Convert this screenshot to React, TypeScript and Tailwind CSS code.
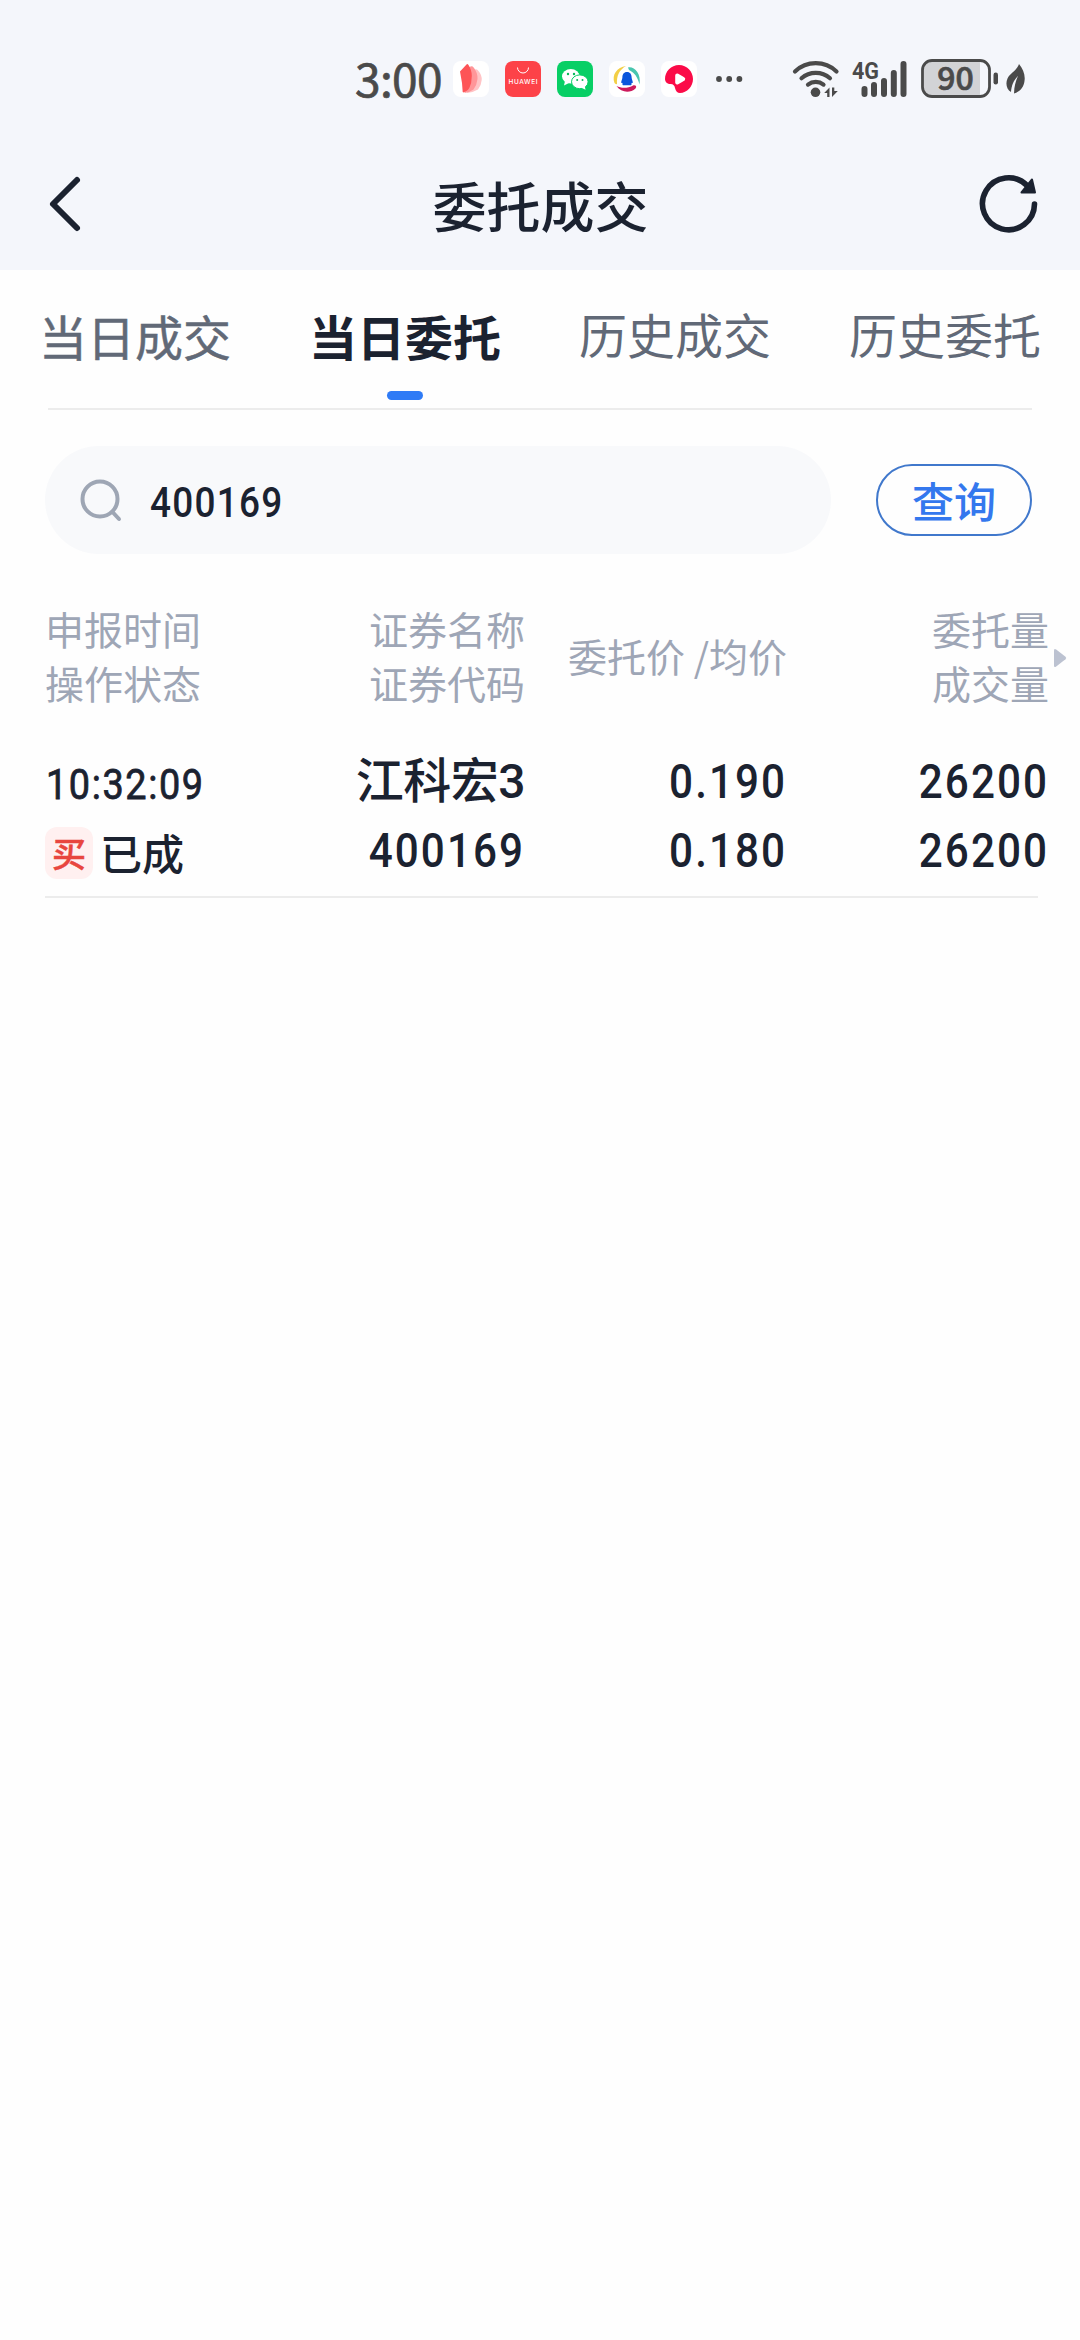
import clsx from "clsx";

const tabs = ["当日成交", "当日委托", "历史成交", "历史委托"];

const orders = [
  {
    time: "10:32:09",
    side: "买",
    status: "已成",
    name: "江科宏3",
    code: "400169",
    price: "0.190",
    avgPrice: "0.180",
    amount: "26200",
    dealAmount: "26200",
  },
];

function AppIcons() {
  return (
    <div className="ml-[13px] flex gap-4">
      <svg width="36" height="36" viewBox="0 0 36 36">
        <rect width="36" height="36" rx="8" fill="#fff" />
        <path d="M18 6q2-.5 3 1l1 1.500q2-.8 3.500 1.500 3.500 4 3.200 9-.3 5-3.700 9.500-5 3-11 3.500z" fill="#ffc4c6" />
        <path d="M15 7l2.500-1.500q2-.8 3 1 4.500 5.500 4 11.500-.6 6-4 10.500-4 3-9 3.500z" fill="#ff9699" />
        <path d="M7 10.500l6.500-7q1-1 1.800.3 3.500 5 3.500 11.200 0 7-2.500 12-1 2-3 3l-2.800 1.500-.8-.5-.7-9z" fill="#fd5457" />
      </svg>
      <svg width="36" height="36" viewBox="0 0 36 36">
        <rect width="36" height="36" rx="8" fill="#fd4248" />
        <path d="M12.500 6.500a5.500 5.500 0 0 0 11 0" fill="none" stroke="#fff" strokeWidth="1" />
        <text x="18" y="23" textAnchor="middle" textLength="29" fontSize="6.500" fontWeight="500" fill="#fff" fontFamily="Inter">
          HUAWEI
        </text>
      </svg>
      <svg width="36" height="36" viewBox="0 0 36 36">
        <rect width="36" height="36" rx="8" fill="#07cf65" />
        <ellipse cx="13.800" cy="15.300" rx="8.800" ry="7.300" fill="#fff" />
        <path d="M8 20l-1 4.500 5-2.500z" fill="#fff" />
        <ellipse cx="22.800" cy="20.800" rx="8.300" ry="6.900" fill="#fff" stroke="#07cf65" strokeWidth="1" />
        <path d="M24 26.500l4.500 2.300-.8-4z" fill="#fff" />
        <circle cx="11" cy="13" r="1.200" fill="#07b95a" />
        <circle cx="17" cy="13" r="1.200" fill="#07b95a" />
        <circle cx="20.200" cy="19" r="1" fill="#07b95a" />
        <circle cx="25.500" cy="19" r="1" fill="#07b95a" />
      </svg>
      <svg width="36" height="36" viewBox="0 0 36 36">
        <rect width="36" height="36" rx="8" fill="#fff" />
        <path d="M17 5C8 6 2.500 14 5.500 22q1 1.500 2.500 1C7.500 15 10 9 17 5z" fill="#f3cf45" />
        <path d="M19 6.500c6-1.500 13.500 6 11.500 17C28.500 16 26 12 20 9z" fill="#49c6ae" />
        <path d="M7.500 25c5 2.500 11 2.500 17-.8 2.500-.4 3.500 1.500 2 3.200C21 32.500 12 31.500 7.500 25z" fill="#cd1a5c" />
        <path d="M18 11c-3.300 0-4.600 2.600-4.600 5.200 0 2-1 3-1.200 5 0 1 .8 1 1.200.6.300 1.200-.4 2.200.6 2.400h8c1-.2.300-1.200.6-2.400.4.400 1.200.4 1.200-.6-.2-2-1.200-3-1.200-5 0-2.600-1.300-5.200-4.600-5.200z" fill="#0a55dc" />
      </svg>
      <svg width="36" height="36" viewBox="0 0 36 36">
        <rect width="36" height="36" rx="8" fill="#fff" />
        <path d="M18 4C10 4 4 10.500 4 18c0 3 2.500 5 5.500 5 3 .2 4 1.500 4.500 4 .6 3 2.500 5 5 5 7 0 13-6.500 13-14S26 4 18 4z" fill="#fb0b48" />
        <path d="M16.200 14.500l6 3.500-6 3.500z" fill="#fff" stroke="#fff" strokeWidth="4" strokeLinejoin="round" />
      </svg>
    </div>
  );
}

function StatusBar() {
  return (
    <div className="flex h-[138px] items-center pt-5 pl-[355px] text-[#4a4a4a]">
      <span className="mt-[-5px] w-[85px] text-[46px] leading-[36px] tracking-[-0.6px] whitespace-nowrap [-webkit-text-stroke:0.7px]">
        3:00
      </span>
      <AppIcons />
      <svg width="28" height="8" viewBox="0 0 28 8" className="ml-[18px]" fill="currentColor">
        <circle cx="4" cy="4" r="2.900" />
        <circle cx="14.200" cy="4" r="2.900" />
        <circle cx="24.400" cy="4" r="2.900" />
      </svg>
      {/* wifi */}
      <svg width="48" height="38" viewBox="0 0 48 38" className="ml-[49px]" fill="none" stroke="currentColor" strokeWidth="4.200" strokeLinecap="round">
        <path d="M3 11.500a30 30 0 0 1 41.500 0" />
        <path d="M9.500 18.200a21.500 21.500 0 0 1 28.500 0" />
        <path d="M16 24.600a12.500 12.500 0 0 1 15.500 0" />
        <circle cx="23.500" cy="32.300" r="4.800" fill="currentColor" stroke="none" />
        <path d="M37.500 27.500v9.500h-2.300V33h-3zM40 37v-9.500h2.300v3.500h3.500z" fill="currentColor" stroke="none" />
      </svg>
      {/* signal */}
      <svg width="56" height="50" viewBox="0 -6 56 50" className="ml-[12px]" stroke="currentColor" strokeWidth="6" strokeLinecap="round">
        <text x="0" y="19" fontSize="24" fontWeight="700" textLength="27" lengthAdjust="spacingAndGlyphs" fill="currentColor" stroke="none" fontFamily="Roboto">
          4G
        </text>
        <path d="M12.500 29v5M22 25v9M32 21v13M41.800 13v21M51.500 4v30" />
      </svg>
      {/* battery */}
      <svg width="80" height="54" viewBox="0 -6 80 54" className="ml-[12px]">
        <rect x="2.500" y="2.500" width="67" height="36" rx="9" fill="#f4f6fb" />
        <path d="M11 4h49v34H11a7 7 0 0 1-7-7V11a7 7 0 0 1 7-7z" fill="#d2d3d6" />
        <rect x="2.500" y="2.500" width="67" height="36" rx="9.500" fill="none" stroke="currentColor" strokeWidth="2.800" />
        <rect x="73.500" y="14.500" width="4.500" height="12" rx="2.200" fill="currentColor" />
        <text x="35.500" y="32" textAnchor="middle" fontSize="32" fontWeight="500" fill="currentColor" stroke="currentColor" strokeWidth="0.700" fontFamily="Noto Sans CJK SC">
          90
        </text>
      </svg>
      {/* power saving leaf */}
      <svg width="22" height="32" viewBox="0 0 22 32" className="ml-[5px]" fill="currentColor">
        <path d="M14 1c4 5 6.500 11 5.500 17-.8 6-4 10.500-10.500 12.500.2-7 1.500-12 4-17.500C8.500 17.500 6.500 22.500 6 29 1.500 26.500.3 20.500 2.500 15.500 5 10 11.500 8 14 1z" />
      </svg>
    </div>
  );
}

function TitleBar() {
  return (
    <div className="flex h-[132px] items-center justify-between pr-[41px] pl-[48px] text-[#1b2230]">
      <svg width="36" height="58" viewBox="0 0 36 58" fill="none" stroke="currentColor" strokeWidth="6" strokeLinecap="round" strokeLinejoin="round">
        <path d="M29 5L5 29l24 24" />
      </svg>
      <h1 className="mt-[2px] ml-[18px] text-[54px] leading-[60px] font-medium">委托成交</h1>
      <svg width="60" height="60" viewBox="0 0 60 60" fill="none" stroke="currentColor" strokeWidth="5.600" strokeLinecap="round">
        <path d="M55.500 30A26 26 0 1 1 48 11.500" />
        <path d="M53 5.500L56 18.500H42.500z" fill="currentColor" strokeWidth="2" strokeLinejoin="round" />
      </svg>
    </div>
  );
}

function Tabs() {
  return (
    <div>
      <div className="grid h-[138px] grid-cols-4 text-[48px] leading-[60px] text-[#616977]">
        {tabs.map((tab, i) => (
          <div
            key={tab}
            className={clsx(
              "flex flex-col items-center",
              i < 2 ? "pt-[35px]" : "pt-[33px]",
              i == 0 && "[-webkit-text-stroke:0.5px]",
              i == 1 && "font-bold text-[#1b2230]"
            )}
          >
            {tab}
            {i == 1 && <div className="mt-[26px] h-[9px] w-9 rounded-full bg-[#2f7bf6]"></div>}
          </div>
        ))}
      </div>
      <div className="mx-12 h-[2px] bg-[#ececec]"></div>
    </div>
  );
}

function Search() {
  return (
    <div className="mt-9 flex items-center justify-between pr-12 pl-[45px]">
      <div className="flex h-[108px] w-[786px] items-center rounded-full bg-[#f8f9fb] pl-[34px]">
        <svg width="44" height="44" viewBox="0 0 44 44" fill="none" stroke="#9ea6b4" strokeWidth="4" strokeLinecap="round">
          <circle cx="21" cy="21" r="17.500" />
          <path d="M33.500 34l6.500 7" />
        </svg>
        <span className="mt-[6px] ml-[27px] origin-left scale-x-[0.88] font-[Roboto] text-[42px] leading-[48px] font-medium tracking-[1.4px] text-[#1b2230]">
          400169
        </span>
      </div>
      <button className="h-[72px] w-[156px] rounded-full border-2 border-[#4078cc] text-[42px] leading-[66px] font-medium text-[#3478ee]">
        查询
      </button>
    </div>
  );
}

function TableHead() {
  return (
    <div className="mt-[47px] flex h-[108px] items-center text-[39px] leading-[54px] text-[#9ea6b6]">
      <div className="w-[240px] pl-[45px]">
        <div>申报时间</div>
        <div>操作状态</div>
      </div>
      <div className="w-[285px] text-right">
        <div>证券名称</div>
        <div>证券代码</div>
      </div>
      <div className="w-[262px] text-right whitespace-nowrap">委托价 /均价</div>
      <div className="w-[262px] text-right">
        <div>委托量</div>
        <div>成交量</div>
      </div>
      <svg width="14" height="20" viewBox="0 0 14 20" className="mt-[6px] ml-[5px]" fill="#bcc2d1">
        <path d="M0 2.500Q0 0 2.200 1.600L11.500 8.800Q13 10 11.500 11.200L2.200 18.400Q0 20 0 17.500z" />
      </svg>
    </div>
  );
}

function Digits({ value }: { value: string }) {
  return <div className="origin-right scale-x-[0.88] tracking-[2.3px]">{value}</div>;
}

function OrderRow({ order }: { order: (typeof orders)[0] }) {
  return (
    <div>
      <div className="flex h-[149px] font-[Roboto,'Noto_Sans_CJK_SC'] text-[48px] font-medium text-[#1b2230]">
        <div className="w-[240px] pl-[45px] text-[42px]">
          <div className="ml-px origin-left scale-x-90 pt-[8px] leading-[60px] font-normal tracking-[1.8px] [-webkit-text-stroke:0.8px]">
            {order.time}
          </div>
          <div className="mt-[12px] flex h-[52px] items-center">
            <div className="h-[52px] w-12 rounded-xl bg-[#fff0f0] text-center font-['Noto_Sans_CJK_SC'] text-[34px] leading-[52px] text-[#e8463f] [-webkit-text-stroke:0.5px]">
              {order.side}
            </div>
            <div className="mt-[5px] ml-[7px] leading-[52px]">{order.status}</div>
          </div>
        </div>
        <div className="w-[285px] text-right leading-[69px]">
          <div className="tracking-[-0.5px]">{order.name}</div>
          <Digits value={order.code} />
        </div>
        <div className="w-[262px] text-right leading-[69px]">
          <Digits value={order.price} />
          <Digits value={order.avgPrice} />
        </div>
        <div className="w-[262px] text-right leading-[69px]">
          <Digits value={order.amount} />
          <Digits value={order.dealAmount} />
        </div>
      </div>
      <div className="mr-[42px] ml-[45px] h-[2px] bg-[#ececec]"></div>
    </div>
  );
}

export default function App() {
  return (
    <div className="min-h-[2340px] w-[1080px] bg-[#fefefe] font-['Noto_Sans_CJK_SC',sans-serif]">
      <header className="bg-[#f4f6fb]">
        <StatusBar />
        <TitleBar />
      </header>
      <Tabs />
      <Search />
      <TableHead />
      <div className="mt-[38px]">
        {orders.map((order) => (
          <OrderRow order={order} key={order.time} />
        ))}
      </div>
    </div>
  );
}
